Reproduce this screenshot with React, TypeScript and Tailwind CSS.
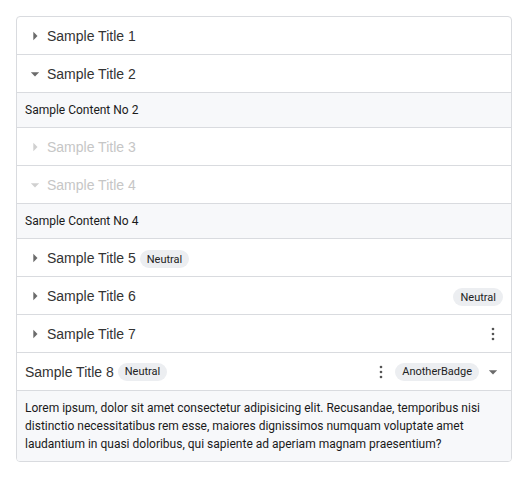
import React from "react";

const Right = ({ disabled }: { disabled?: boolean }) => (
  <svg width="20" height="20" viewBox="0 0 24 24" className={disabled ? "fill-[#d0d0d0]" : "fill-[#6b6b6b]"}>
    <path d="M10 17l5-5-5-5z" />
  </svg>
);
const Down = ({ disabled }: { disabled?: boolean }) => (
  <svg width="20" height="20" viewBox="0 0 24 24" className={disabled ? "fill-[#d0d0d0]" : "fill-[#6b6b6b]"}>
    <path d="M7 10l5 5 5-5z" />
  </svg>
);
const Dots = () => (
  <svg width="20" height="20" viewBox="0 0 24 24" className="fill-[#555]">
    <circle cx="12" cy="6" r="1.6" />
    <circle cx="12" cy="12" r="1.6" />
    <circle cx="12" cy="18" r="1.6" />
  </svg>
);
const Badge = ({ children }: { children: React.ReactNode }) => (
  <span className="inline-flex h-[18px] items-center rounded-full bg-[#eceef1] px-[7px] text-[11px] leading-none text-[#222]">
    {children}
  </span>
);

const Header = ({ children }: { children: React.ReactNode }) => (
  <div className="flex h-[38px] items-center border-b border-[#d9dbdf] px-2">{children}</div>
);
const Title = ({ children, disabled }: { children: React.ReactNode; disabled?: boolean }) => (
  <span
    className={"text-[14px] leading-5 " + (disabled ? "text-[#c6c6c6]" : "text-[#333]")}
    style={{ fontFamily: "'Liberation Sans', Arial, sans-serif" }}
  >
    {children}
  </span>
);
const Content = ({ children, last }: { children: React.ReactNode; last?: boolean }) => (
  <div className={"bg-[#f7f8fa] px-2 py-2 text-[12px] leading-[18px] text-[#1a1a1a] " + (last ? "" : "border-b border-[#d9dbdf]")}>
    {children}
  </div>
);

export default function App() {
  return (
    <div className="p-4" style={{ fontFamily: "Roboto, 'Liberation Sans', sans-serif" }}>
      <div className="overflow-hidden rounded border border-[#d9dbdf] bg-white">
        <Header>
          <div className="flex items-center gap-0.5"><Right /><Title>Sample Title 1</Title></div>
        </Header>
        <Header>
          <div className="flex items-center gap-0.5"><Down /><Title>Sample Title 2</Title></div>
        </Header>
        <Content>Sample Content No 2</Content>
        <Header>
          <div className="flex items-center gap-0.5"><Right disabled /><Title disabled>Sample Title 3</Title></div>
        </Header>
        <Header>
          <div className="flex items-center gap-0.5"><Down disabled /><Title disabled>Sample Title 4</Title></div>
        </Header>
        <Content>Sample Content No 4</Content>
        <Header>
          <div className="flex items-center gap-0.5"><Right /><Title>Sample Title 5</Title><span className="ml-0.5"><Badge>Neutral</Badge></span></div>
        </Header>
        <Header>
          <div className="flex items-center gap-0.5"><Right /><Title>Sample Title 6</Title></div>
          <div className="ml-auto"><Badge>Neutral</Badge></div>
        </Header>
        <Header>
          <div className="flex items-center gap-0.5"><Right /><Title>Sample Title 7</Title></div>
          <div className="ml-auto"><Dots /></div>
        </Header>
        <Header>
          <div className="flex items-center gap-1"><Title>Sample Title 8</Title><Badge>Neutral</Badge></div>
          <div className="ml-auto flex items-center gap-1"><Dots /><Badge>AnotherBadge</Badge><Down /></div>
        </Header>
        <Content last>
          Lorem ipsum, dolor sit amet consectetur adipisicing elit. Recusandae, temporibus nisi distinctio necessitatibus rem esse, maiores dignissimos numquam voluptate amet laudantium in quasi doloribus, qui sapiente ad aperiam magnam praesentium?
        </Content>
      </div>
    </div>
  );
}
